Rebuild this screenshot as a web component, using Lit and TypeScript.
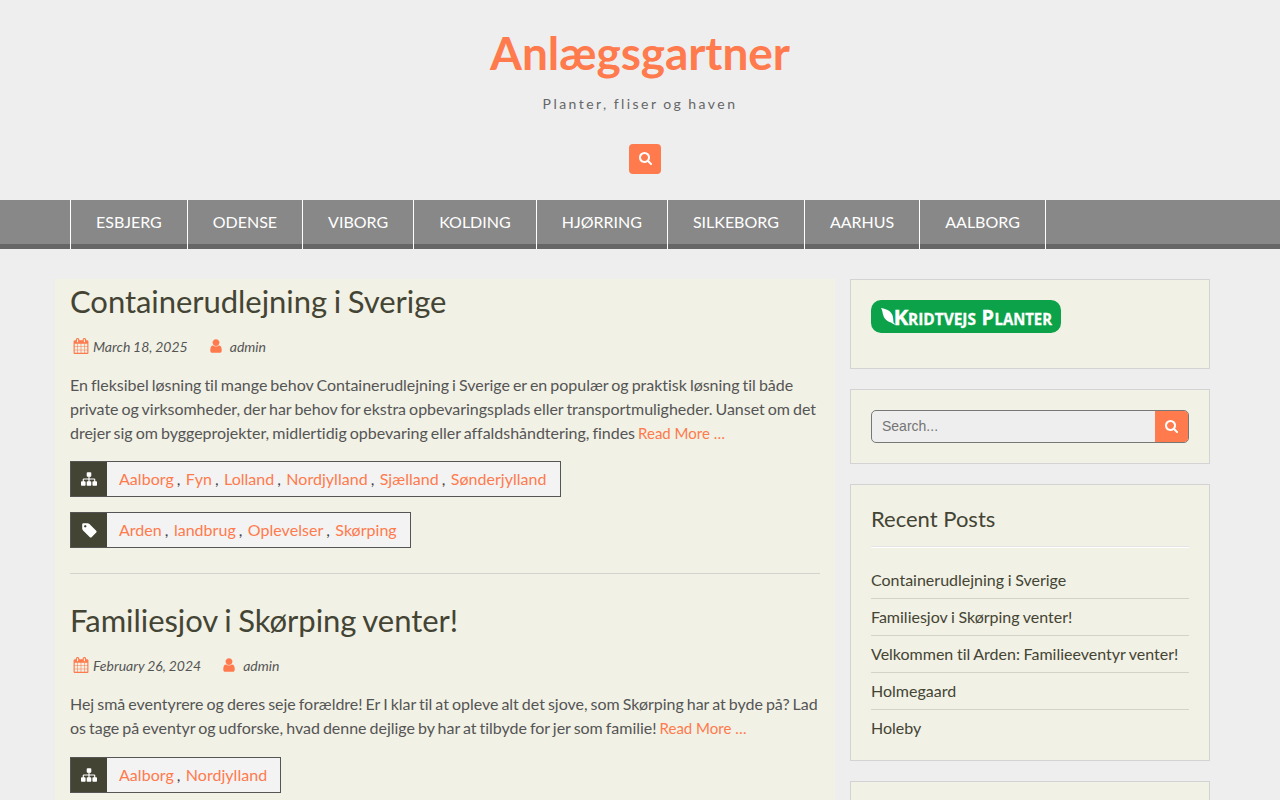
import { LitElement, html, css, svg } from 'lit';
import { customElement, property } from 'lit/decorators.js';

const ICONS: Record<string, string> = {
  search: 'M1152 832q0-185-131.5-316.5t-316.5-131.5-316.5 131.5-131.5 316.5 131.5 316.5 316.5 131.5 316.5-131.5 131.5-316.5zm512 832q0 52-38 90t-90 38q-54 0-90-38l-343-342q-179 124-399 124-143 0-273.5-55.5t-225-150-150-225-55.5-273.5 55.5-273.5 150-225 225-150 273.5-55.5 273.5 55.5 225 150 150 225 55.5 273.5q0 220-124 399l343 343q37 37 37 90z',
  calendar: 'M192 1664h288v-288h-288v288zm352 0h320v-288h-320v288zm-352-352h288v-320h-288v320zm352 0h320v-320h-320v320zm-352-384h288v-288h-288v288zm736 736h320v-288h-320v288zm-384-736h320v-288h-320v288zm768 736h288v-288h-288v288zm-384-352h320v-320h-320v320zm-352-864v-288q0-13-9.5-22.5t-22.5-9.5h-64q-13 0-22.5 9.5t-9.5 22.5v288q0 13 9.5 22.5t22.5 9.5h64q13 0 22.5-9.5t9.5-22.5zm736 864h288v-320h-288v320zm-384-384h320v-288h-320v288zm384 0h288v-288h-288v288zm32-480v-288q0-13-9.5-22.5t-22.5-9.5h-64q-13 0-22.5 9.5t-9.5 22.5v288q0 13 9.5 22.5t22.5 9.5h64q13 0 22.5-9.5t9.5-22.5zm384-64v1280q0 52-38 90t-90 38h-1408q-52 0-90-38t-38-90v-1280q0-52 38-90t90-38h128v-96q0-66 47-113t113-47h64q66 0 113 47t47 113v96h384v-96q0-66 47-113t113-47h64q66 0 113 47t47 113v96h128q52 0 90 38t38 90z',
  user: 'M1536 1399q0 109-62.5 187t-150.5 78h-854q-88 0-150.5-78t-62.5-187q0-85 8.5-160.5t31.5-152 58.5-131 94-89 134.5-34.5q131 128 313 128t313-128q76 0 134.5 34.5t94 89 58.5 131 31.5 152 8.5 160.5zm-256-887q0 159-112.5 271.5t-271.5 112.5-271.5-112.5-112.5-271.5 112.5-271.5 271.5-112.5 271.5 112.5 112.5 271.5z',
  tag: 'M576 448q0-53-37.5-90.5t-90.5-37.5-90.5 37.5-37.5 90.5 37.5 90.5 90.5 37.5 90.5-37.5 37.5-90.5zm1067 576q0 53-37 90l-491 492q-39 37-91 37-53 0-90-37l-715-716q-38-37-64.5-101t-26.5-117v-416q0-52 38-90t90-38h416q53 0 117 26.5t102 64.5l715 714q37 39 37 91z',
  sitemap: 'M1792 1248v320q0 40-28 68t-68 28h-320q-40 0-68-28t-28-68v-320q0-40 28-68t68-28h96v-192h-512v192h96q40 0 68 28t28 68v320q0 40-28 68t-68 28h-320q-40 0-68-28t-28-68v-320q0-40 28-68t68-28h96v-192h-512v192h96q40 0 68 28t28 68v320q0 40-28 68t-68 28h-320q-40 0-68-28t-28-68v-320q0-40 28-68t68-28h96v-192q0-52 38-90t90-38h512v-192h-96q-40 0-68-28t-28-68v-320q0-40 28-68t68-28h320q40 0 68 28t28 68v320q0 40-28 68t-68 28h-96v192h512q52 0 90 38t38 90v192h96q40 0 68 28t28 68z',
};

const icon = (name: string) => html`
  <svg class="icon icon-${name}" viewBox="0 0 1792 1792" aria-hidden="true">${svg`<path d=${ICONS[name]}></path>`}</svg>
`;

interface Post {
  title: string;
  date: string;
  excerpt: string;
  categories: string[];
  tags: string[];
}

const MENU = ['Esbjerg', 'Odense', 'Viborg', 'Kolding', 'Hjørring', 'Silkeborg', 'Aarhus', 'Aalborg'];

const POSTS: Post[] = [
  {
    title: 'Containerudlejning i Sverige',
    date: 'March 18, 2025',
    excerpt: 'En fleksibel løsning til mange behov Containerudlejning i Sverige er en populær og praktisk løsning til både private og virksomheder, der har behov for ekstra opbevaringsplads eller transportmuligheder. Uanset om det drejer sig om byggeprojekter, midlertidig opbevaring eller affaldshåndtering, findes',
    categories: ['Aalborg', 'Fyn', 'Lolland', 'Nordjylland', 'Sjælland', 'Sønderjylland'],
    tags: ['Arden', 'landbrug', 'Oplevelser', 'Skørping'],
  },
  {
    title: 'Familiesjov i Skørping venter!',
    date: 'February 26, 2024',
    excerpt: 'Hej små eventyrere og deres seje forældre! Er I klar til at opleve alt det sjove, som Skørping har at byde på? Lad os tage på eventyr og udforske, hvad denne dejlige by har at tilbyde for jer som familie!',
    categories: ['Aalborg', 'Nordjylland'],
    tags: [],
  },
];

const RECENT = [
  'Containerudlejning i Sverige',
  'Familiesjov i Skørping venter!',
  'Velkommen til Arden: Familieeventyr venter!',
  'Holmegaard',
  'Holeby',
];

@customElement('blog-post')
export class BlogPost extends LitElement {
  static styles = css`
    :host {
      display: block;
      padding-bottom: 25px;
      margin-bottom: 24px;
      border-bottom: 1px solid #d3d3ce;
    }
    a {
      color: #ff7a4d;
      text-decoration: none;
    }
    .title {
      margin: 0;
      font-size: 31px;
      font-weight: 400;
      line-height: 45px;
      letter-spacing: -0.05px;
      word-spacing: -1.2px;
      color: #444434;
    }
    .meta {
      display: flex;
      align-items: center;
      height: 24px;
      margin: 11px 0 14px;
      font-size: 14px;
      font-style: italic;
      word-spacing: -0.5px;
    }
    .icon {
      width: 16px;
      height: 16px;
      fill: currentColor;
    }
    .meta .icon {
      margin-bottom: 2px;
      color: #ff7a4d;
    }
    .meta .icon-calendar {
      margin-right: 4px;
      margin-left: 3px;
    }
    .meta .icon-user {
      margin-right: 6px;
      margin-left: 20px;
    }
    .excerpt {
      margin: 0;
      padding-bottom: 1.4px;
      letter-spacing: -0.025px;
    }
    .more {
      font-size: 15px;
      letter-spacing: 0;
      word-spacing: 0;
    }
    .terms {
      display: flex;
      width: fit-content;
      height: 34px;
      margin-top: 15px;
      border: 1px solid #555;
      background: #f3f3f3;
      line-height: 34px;
      letter-spacing: 0.03px;
    }
    .badge {
      display: flex;
      align-items: center;
      justify-content: center;
      width: 36px;
      background: #444434;
      color: #fff;
    }
    .icon-tag {
      width: 17px;
      height: 17px;
    }
    .list {
      padding: 0 13px 0 12px;
    }
    .term + .term::before {
      content: ',';
      margin: 0 5.4px 0 3px;
      color: #444;
    }
  `;

  @property({ attribute: false }) post!: Post;

  terms(iconName: string, names: string[]) {
    if (!names.length) return '';
    return html`
      <div class="terms">
        <span class="badge">${icon(iconName)}</span>
        <span class="list">${names.map(n => html`<span class="term"><a>${n}</a></span>`)}</span>
      </div>
    `;
  }

  render() {
    const p = this.post;
    return html`
      <h2 class="title">${p.title}</h2>
      <div class="meta">
        ${icon('calendar')}<span>${p.date}</span>
        ${icon('user')}<span>admin</span>
      </div>
      <p class="excerpt">${p.excerpt} <a class="more">Read More …</a></p>
      ${this.terms('sitemap', p.categories)}
      ${this.terms('tag', p.tags)}
    `;
  }
}

@customElement('app-root')
export class AppRoot extends LitElement {
  static styles = css`
    :host {
      display: block;
      height: 800px;
      overflow: hidden;
      background: #eee;
      color: #555;
      font: 16px/24px Lato, sans-serif;
      font-variant-ligatures: none;
      word-spacing: -1px;
    }
    .header {
      display: flex;
      flex-direction: column;
      align-items: center;
      box-sizing: border-box;
      height: 200px;
      padding-top: 24px;
    }
    .site-title {
      margin: 0;
      font-size: 46px;
      font-weight: 700;
      line-height: 58px;
      letter-spacing: -0.04px;
      color: #ff7a4d;
    }
    .tagline {
      margin: 10px 0 28px;
      font-size: 14px;
      letter-spacing: 2.45px;
      color: #666;
    }
    .icon {
      width: 14px;
      height: 14px;
      fill: #fff;
    }
    .search-toggle {
      display: flex;
      align-items: center;
      box-sizing: border-box;
      width: 32px;
      height: 30px;
      margin-left: 10px;
      padding: 0 0 2px 10px;
      border-radius: 4px;
      background: #ff7a4d;
    }
    .nav {
      background: #888;
      box-shadow: inset 0 -5px #666;
    }
    .menu {
      display: flex;
      box-sizing: border-box;
      width: 1140px;
      margin: 0 auto;
    }
    .menu a {
      height: 49px;
      padding: 0 25px;
      border-right: 1px solid #fff;
      color: #fff;
      line-height: 44px;
      text-transform: uppercase;
    }
    .menu a:first-child {
      border-left: 1px solid #fff;
    }
    .content {
      display: flex;
      align-items: flex-start;
      gap: 15px;
      width: 1170px;
      margin: 30px auto 0;
    }
    .main {
      box-sizing: border-box;
      width: 780px;
      padding: 0 15px;
      background: #f1f1e5;
    }
    .sidebar {
      display: flex;
      flex-direction: column;
      gap: 20px;
      width: 360px;
    }
    .widget {
      padding: 20px;
      border: 1px solid #d3d3d3;
      background: #f1f1e5;
    }
    .logo {
      display: block;
      width: 190px;
      height: 33px;
      margin-bottom: 15px;
    }
    .logo-text {
      font-family: "Open Sans", "Noto Sans", sans-serif;
      font-weight: 700;
      font-size: 15.5px;
      fill: #fff;
      stroke: #fff;
      stroke-width: 0.3px;
    }
    .logo-cap {
      font-size: 21px;
    }
    .search {
      display: flex;
      box-sizing: border-box;
      height: 33px;
      border: 1px solid #777;
      border-radius: 5px;
      overflow: hidden;
      background: #eee;
      font: 14px/31px "Liberation Sans", sans-serif;
      color: #757575;
    }
    .field {
      flex: 1;
      padding-left: 10px;
    }
    .submit {
      display: flex;
      align-items: center;
      box-sizing: border-box;
      width: 33px;
      padding: 0 0 2px 10px;
      background: #ff7a4d;
    }
    .widget-title {
      margin: 0 0 15px;
      padding-bottom: 13px;
      border-bottom: 1px solid #e4e4e4;
      box-shadow: 0 1px #fff;
      font-size: 22px;
      font-weight: 400;
      line-height: 28px;
      word-spacing: 0;
      color: #444434;
    }
    .recent {
      margin: 0;
      padding: 0;
      list-style: none;
      word-spacing: -0.5px;
      color: #444434;
    }
    .recent li {
      padding: 6px 0;
    }
    .recent li:last-child {
      padding-bottom: 0;
    }
    .recent li + li {
      border-top: 1px solid #d3d3c9;
    }
  `;

  render() {
    return html`
      <header class="header">
        <h1 class="site-title">Anlægsgartner</h1>
        <p class="tagline">Planter, fliser og haven</p>
        <a class="search-toggle">${icon('search')}</a>
      </header>
      <nav class="nav">
        <div class="menu">${MENU.map(m => html`<a>${m}</a>`)}</div>
      </nav>
      <div class="content">
        <main class="main">
          ${POSTS.map(p => html`<blog-post .post=${p}></blog-post>`)}
        </main>
        <aside class="sidebar">
          <section class="widget">
            <svg class="logo" viewBox="0 0 190 33">
              <rect width="190" height="33" rx="10" fill="#0ca24a"></rect>
              <path d="M10 8C17 9 21 12 22 17L22.500 22.500L25 25Q22 24 20 22.500C14 21 12 16 11.500 12Q11 9.500 10 8Z" fill="#fff"></path>
              <text class="logo-text" y="25">
                <tspan class="logo-cap" x="22.500" textLength="15" lengthAdjust="spacingAndGlyphs">K</tspan><tspan x="37" textLength="68" lengthAdjust="spacingAndGlyphs">RIDTVEJS</tspan><tspan class="logo-cap" x="110.500" textLength="12.500" lengthAdjust="spacingAndGlyphs">P</tspan><tspan x="123.500" textLength="57.500" lengthAdjust="spacingAndGlyphs">LANTER</tspan>
              </text>
            </svg>
          </section>
          <section class="widget">
            <div class="search">
              <span class="field">Search...</span>
              <span class="submit">${icon('search')}</span>
            </div>
          </section>
          <section class="widget">
            <h3 class="widget-title">Recent Posts</h3>
            <ul class="recent">${RECENT.map(r => html`<li>${r}</li>`)}</ul>
          </section>
          <section class="widget"></section>
        </aside>
      </div>
    `;
  }
}
